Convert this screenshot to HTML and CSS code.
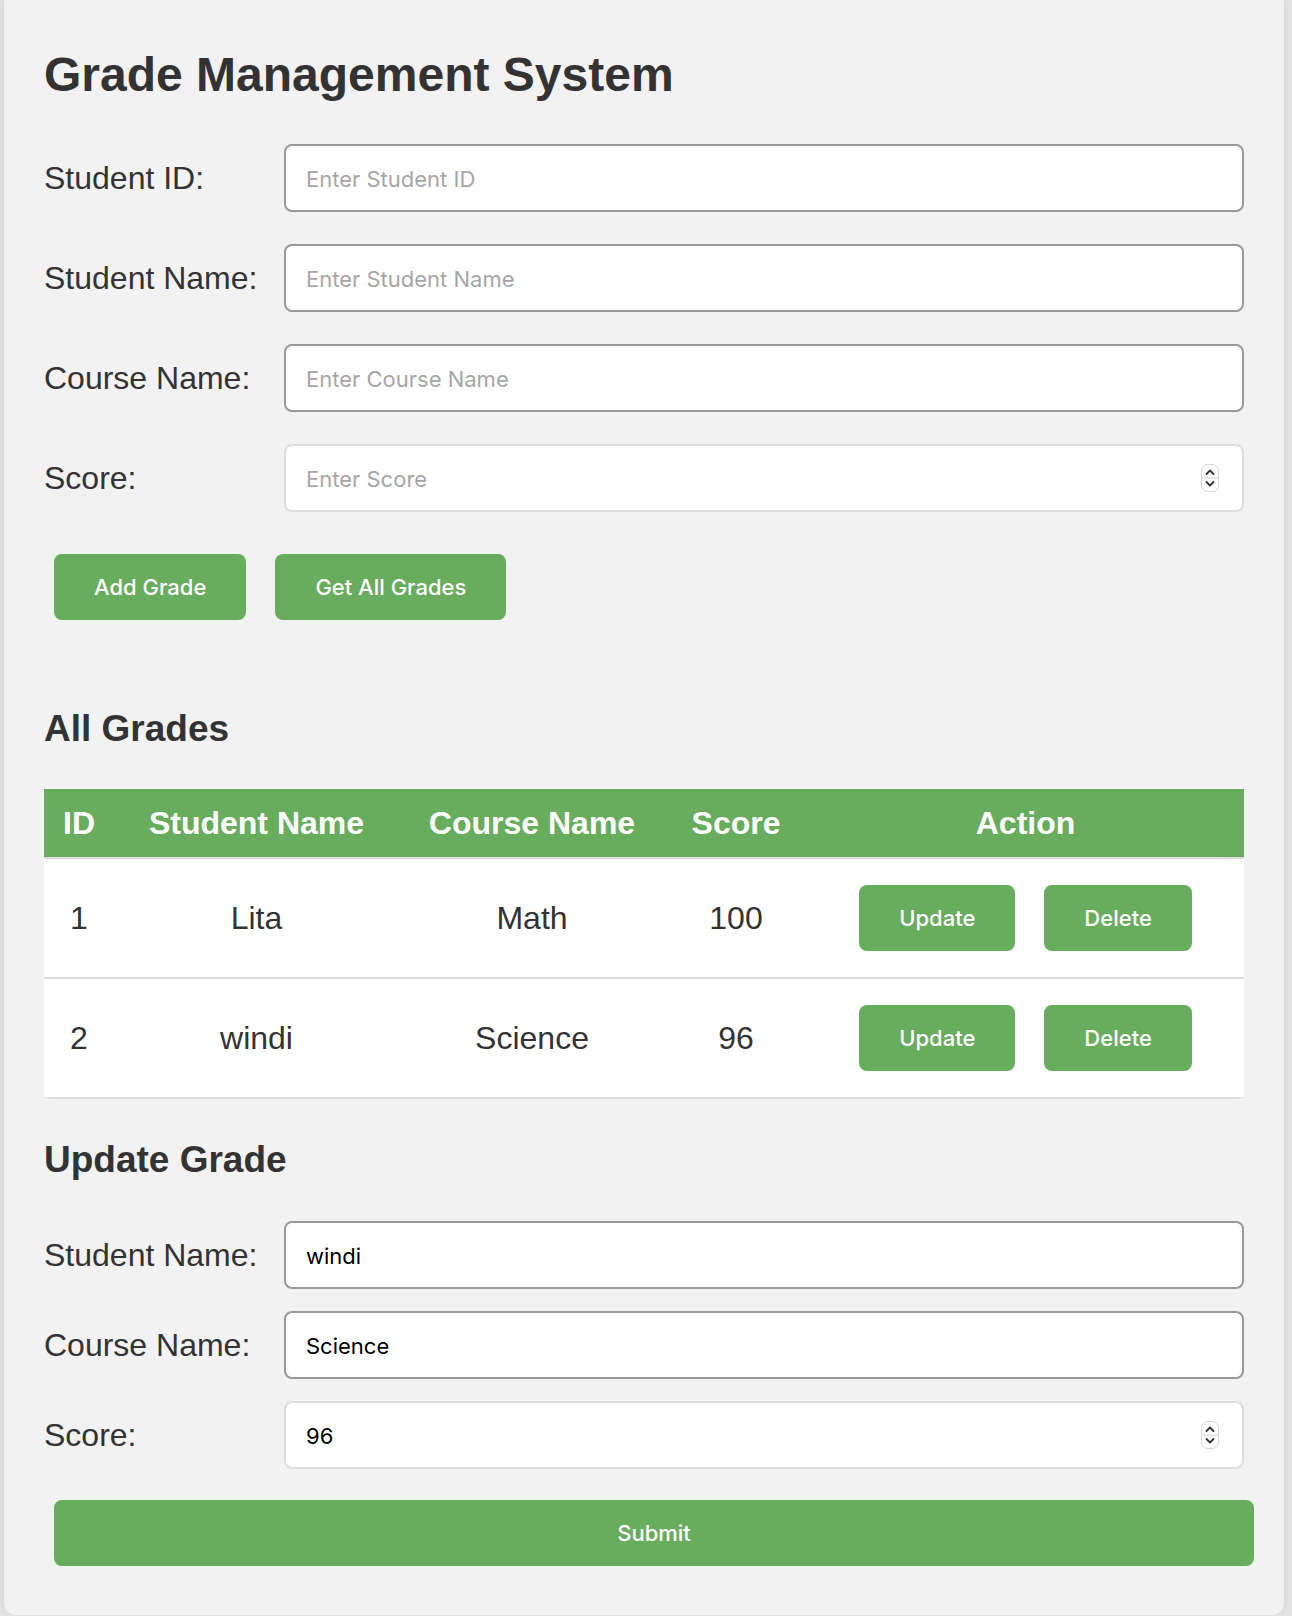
FILE: index.html
```html
<!DOCTYPE html>
<html lang="en">
<head>
<meta charset="utf-8">
<title>Grade Management System</title>
<link rel="stylesheet" href="styles.css">
</head>
<body>
<div class="page">
  <h1 class="title">Grade Management System</h1>

  <div class="form form-add">
    <div class="row">
      <label class="label">Student ID:</label>
      <input class="field" type="text" placeholder="Enter Student ID">
    </div>
    <div class="row">
      <label class="label">Student Name:</label>
      <input class="field" type="text" placeholder="Enter Student Name">
    </div>
    <div class="row">
      <label class="label">Course Name:</label>
      <input class="field" type="text" placeholder="Enter Course Name">
    </div>
    <div class="row">
      <label class="label">Score:</label>
      <div class="field field-number">
        <input class="field-input" type="text" placeholder="Enter Score">
        <span class="stepper"><svg width="18" height="28" viewBox="0 0 18 28"><rect x="0.5" y="0.5" width="17" height="27" rx="6.5" fill="#fff" stroke="#d6d6d6"/><line x1="1" y1="14" x2="17" y2="14" stroke="#d6d6d6"/><path d="M5.5 10 L9 6.5 L12.5 10" fill="none" stroke="#333" stroke-width="1.8" stroke-linecap="round" stroke-linejoin="round"/><path d="M5.5 18 L9 21.5 L12.5 18" fill="none" stroke="#333" stroke-width="1.8" stroke-linecap="round" stroke-linejoin="round"/></svg></span>
      </div>
    </div>
  </div>

  <div class="actions">
    <button class="btn">Add Grade</button>
    <button class="btn">Get All Grades</button>
  </div>

  <h2 class="section-title section-all">All Grades</h2>

  <div class="table-wrap">
    <table class="grades">
      <colgroup>
        <col class="c-id"><col class="c-student"><col class="c-course"><col class="c-score"><col class="c-action">
      </colgroup>
      <thead>
        <tr><th>ID</th><th>Student Name</th><th>Course Name</th><th>Score</th><th>Action</th></tr>
      </thead>
      <tbody>
        <tr>
          <td>1</td><td>Lita</td><td>Math</td><td>100</td>
          <td><div class="row-actions"><button class="btn">Update</button><button class="btn">Delete</button></div></td>
        </tr>
        <tr>
          <td>2</td><td>windi</td><td>Science</td><td>96</td>
          <td><div class="row-actions"><button class="btn">Update</button><button class="btn">Delete</button></div></td>
        </tr>
      </tbody>
    </table>
  </div>

  <h2 class="section-title section-update">Update Grade</h2>

  <div class="form form-update">
    <div class="row">
      <label class="label">Student Name:</label>
      <input class="field" type="text" value="windi">
    </div>
    <div class="row">
      <label class="label">Course Name:</label>
      <input class="field" type="text" value="Science">
    </div>
    <div class="row">
      <label class="label">Score:</label>
      <div class="field field-number">
        <input class="field-input" type="text" value="96">
        <span class="stepper"><svg width="18" height="28" viewBox="0 0 18 28"><rect x="0.5" y="0.5" width="17" height="27" rx="6.5" fill="#fff" stroke="#d6d6d6"/><line x1="1" y1="14" x2="17" y2="14" stroke="#d6d6d6"/><path d="M5.5 10 L9 6.5 L12.5 10" fill="none" stroke="#333" stroke-width="1.8" stroke-linecap="round" stroke-linejoin="round"/><path d="M5.5 18 L9 21.5 L12.5 18" fill="none" stroke="#333" stroke-width="1.8" stroke-linecap="round" stroke-linejoin="round"/></svg></span>
      </div>
    </div>
  </div>

  <button class="btn btn-submit">Submit</button>
</div>
</body>
</html>
```

FILE: styles.css
```css
html, body {
  margin: 0;
  padding: 0;
}

body {
  background: #e4e4e4;
}

.page {
  width: 1280px;
  box-sizing: border-box;
  margin-left: 4px;
  padding: 47px 40px 49px;
  background: #f2f2f2;
  border-radius: 0 0 12px 12px;
  box-shadow: 0 0 8px rgba(0, 0, 0, 0.08);
  font-family: "Liberation Sans", Arial, Helvetica, sans-serif;
  color: #333;
}

.title {
  margin: 0 0 41px;
  font-size: 48px;
  line-height: 56px;
  font-weight: bold;
}

.form {
  display: flex;
  flex-direction: column;
  gap: 32px;
}

.form-update {
  gap: 22px;
}

.row {
  display: grid;
  grid-template-columns: 240px 1fr;
  align-items: center;
}

.label {
  font-size: 32px;
  line-height: 36px;
  color: #333;
}

.field {
  box-sizing: border-box;
  height: 68px;
  width: 100%;
  margin: 0;
  padding: 2px 20px 0;
  border: 2px solid #999;
  border-radius: 8px;
  background: #fff;
  font-family: Inter, "Noto Sans", sans-serif;
  font-size: 22px;
  color: #000;
  outline: none;
}

.field::placeholder,
.field-input::placeholder {
  color: #a6a6a6;
  opacity: 1;
}

.field-number {
  display: flex;
  align-items: center;
  padding: 0 23px 0 20px;
  border-color: #dedede;
}

.field-input {
  flex: 1;
  min-width: 0;
  height: 100%;
  margin: 0;
  padding: 2px 0 0;
  border: 0;
  background: transparent;
  font-family: Inter, "Noto Sans", sans-serif;
  font-size: 22px;
  color: #000;
  outline: none;
}

.stepper {
  display: flex;
  width: 18px;
  height: 28px;
}

.actions {
  display: flex;
  gap: 29px;
  padding-left: 10px;
  margin-top: 42px;
}

.btn {
  box-sizing: border-box;
  height: 66px;
  padding: 0 40px;
  margin: 0;
  border: 0;
  border-radius: 8px;
  background: #68ad5d;
  color: #fff;
  font-family: Inter, "Noto Sans", sans-serif;
  font-size: 22px;
  font-weight: 500;
  cursor: pointer;
}

.section-title {
  font-size: 37px;
  line-height: 42px;
  font-weight: bold;
  color: #333;
}

.section-all {
  margin: 88px 0 39px;
}

.section-update {
  margin: 40px 0 40px;
}

.table-wrap {
  background: #fff;
  border-radius: 0 0 6px 6px;
  overflow: hidden;
}

.grades {
  width: 100%;
  border-collapse: separate;
  border-spacing: 0;
  table-layout: fixed;
}

.c-id { width: 70px; }
.c-student { width: 285px; }
.c-course { width: 266px; }
.c-score { width: 142px; }
.c-action { width: 437px; }

.grades th {
  background: #68ad5d;
  color: #fff;
  font-size: 32px;
  line-height: 36px;
  font-weight: bold;
  padding: 16px 0;
  text-align: center;
  border-bottom: 2px solid #ddd;
}

.grades td {
  padding: 26px 0;
  font-size: 32px;
  line-height: 36px;
  text-align: center;
  vertical-align: middle;
  color: #333;
  border-bottom: 2px solid #ddd;
}

.row-actions {
  display: flex;
  justify-content: center;
  gap: 29px;
}

.btn-submit {
  display: block;
  width: 100%;
  margin: 31px 0 0 10px;
}
```
